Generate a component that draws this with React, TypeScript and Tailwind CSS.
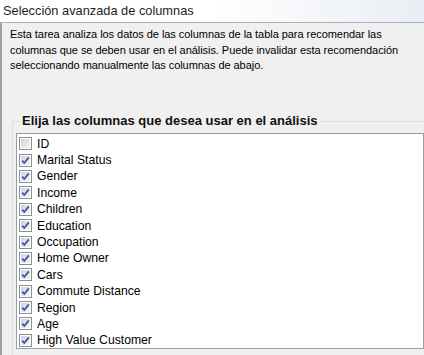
const columns = [
  { name: 'ID', checked: false },
  { name: 'Marital Status', checked: true },
  { name: 'Gender', checked: true },
  { name: 'Income', checked: true },
  { name: 'Children', checked: true },
  { name: 'Education', checked: true },
  { name: 'Occupation', checked: true },
  { name: 'Home Owner', checked: true },
  { name: 'Cars', checked: true },
  { name: 'Commute Distance', checked: true },
  { name: 'Region', checked: true },
  { name: 'Age', checked: true },
  { name: 'High Value Customer', checked: true },
];

export default function App() {
  return (
    <div className="flex h-[355px] w-[424px] flex-col overflow-hidden bg-[#f0f0f0] font-['Liberation_Sans',Arial,sans-serif] text-black">
      {/* Title bar */}
      <div className="flex h-[23px] shrink-0 items-center border-b border-[#a9b1b9] bg-gradient-to-r from-white via-white to-[#e9eef4] pl-[3px] text-[12.8px] text-[#1e1e1e]">
        Selección avanzada de columnas
      </div>

      <div className="flex flex-1 flex-col border-l-2 border-[#a0a0a0]">
        <p className="pl-[8px] pr-[2px] pt-[4px] text-[11px] leading-[15.5px] tracking-[-0.05px]">
          Esta tarea analiza los datos de las columnas de la tabla para recomendar las columnas que se deben usar en el análisis. Puede invalidar esta recomendación seleccionando manualmente las columnas de abajo.
        </p>

        {/* Group box */}
        <div className="relative ml-[10px] mt-[47px] flex-1 border-l border-t border-[#d5dfe5] pl-[3px] pt-[11px]">
          <span className="absolute left-[7px] top-[-9px] bg-[#f0f0f0] px-[2px] text-[13px] font-bold leading-[16px] text-[#111]">
            Elija las columnas que desea usar en el análisis
          </span>
          <div className="h-[216px] border border-[#9a9ea3] bg-white pt-[2px]">
            {columns.map((col) => (
              <div key={col.name} className="flex h-[16.4px] items-center gap-[5px] pl-[2px] text-[12.2px] leading-none">
                <CheckBox checked={col.checked} />
                <span>{col.name}</span>
              </div>
            ))}
          </div>
        </div>
      </div>
    </div>
  );
}

function CheckBox({ checked }: { checked: boolean }) {
  return (
    <svg width="13" height="13" viewBox="0 0 13 13" className="shrink-0">
      <defs>
        <linearGradient id="cbfill" x1="0" y1="0" x2="1" y2="1">
          <stop offset="0" stopColor="#cfd3d8" />
          <stop offset="1" stopColor="#f4f5f6" />
        </linearGradient>
      </defs>
      <rect x="0.5" y="0.5" width="12" height="12" fill="#fff" stroke="#8f8f8f" />
      <rect x="2" y="2" width="9" height="9" fill="url(#cbfill)" />
      {checked && (
        <path d="M3.2 6.6 L5.3 9 L9.8 3.4" fill="none" stroke="#3a4fa8" strokeWidth="1.7" />
      )}
    </svg>
  );
}
